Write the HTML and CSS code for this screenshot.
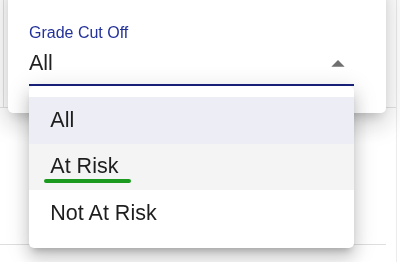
FILE: index.html
```html
<!DOCTYPE html>
<html lang="en">
<head>
<meta charset="utf-8">
<title>Grade Cut Off</title>
<link rel="stylesheet" href="styles.css">
</head>
<body>
  <div class="page">
    <div class="bg-main">
      <div class="bg-top"><div class="bg-rule"></div></div>
      <div class="bg-mid"></div>
      <div class="bg-line"></div>
    </div>
    <div class="bg-vline"></div>
  </div>

  <div class="dialog">
    <div class="field">
      <div class="field-label">Grade Cut Off</div>
      <div class="select">
        <span class="select-value">All</span>
        <svg class="select-icon" viewBox="0 0 24 24" aria-hidden="true"><path d="M7 14l5-5 5 5z"/></svg>
      </div>
    </div>
  </div>

  <ul class="menu">
    <li class="menu-item selected">All</li>
    <li class="menu-item hover">At Risk<span class="mark"></span></li>
    <li class="menu-item">Not At Risk</li>
  </ul>
</body>
</html>
```

FILE: styles.css
```css
html, body {
  margin: 0;
  padding: 0;
}
body {
  width: 400px;
  height: 262px;
  overflow: hidden;
  background: #ffffff;
  font-family: "Liberation Sans", Arial, Helvetica, sans-serif;
  color: rgba(0, 0, 0, 0.87);
}

/* background page */
.page {
  display: grid;
  grid-template-columns: 396px 1px;
  height: 262px;
}
.bg-main {
  display: flex;
  flex-direction: column;
}
.bg-top {
  height: 107px;
  padding-left: 3px;
  border-bottom: 1px solid #e2e2e2;
  display: flex;
}
.bg-rule {
  border-left: 1px solid #e2e2e2;
}
.bg-mid {
  height: 136px;
}
.bg-line {
  width: 386px;
  border-top: 1px solid #dedede;
}
.bg-vline {
  background: #ececec;
}

/* dialog */
.dialog {
  position: fixed;
  left: 8px;
  top: -20px;
  width: 378px;
  height: 133px;
  background: #ffffff;
  border-radius: 5px;
  box-shadow: 0 8px 12px -6px rgba(0, 0, 0, 0.2),
              0 12px 24px 2px rgba(0, 0, 0, 0.1),
              0 4px 30px 6px rgba(0, 0, 0, 0.08);
  box-sizing: border-box;
  padding: 45px 32px 0 21px;
}
.field {
  display: flex;
  flex-direction: column;
}
.field-label {
  font-size: 16px;
  line-height: 16px;
  color: #23319a;
  margin-bottom: 10px;
}
.select {
  position: relative;
  display: flex;
  align-items: center;
  height: 25.3px;
  padding-bottom: 7.5px;
  border-bottom: 2.5px solid #1a237e;
}
.select-value {
  font-size: 21.5px;
  line-height: 25.3px;
}
.select-icon {
  position: absolute;
  right: 0;
  top: -3px;
  width: 32px;
  height: 32px;
  fill: #6f6f6f;
}

/* menu */
.menu {
  position: fixed;
  left: 29px;
  top: 86.3px;
  width: 325px;
  margin: 0;
  padding: 10.67px 0;
  list-style: none;
  background: #ffffff;
  border-radius: 5px;
  box-shadow: 0 6px 7px -4px rgba(0, 0, 0, 0.22),
              0 10px 16px 1px rgba(0, 0, 0, 0.14),
              0 4px 22px 4px rgba(0, 0, 0, 0.1);
}
.menu-item {
  position: relative;
  display: flex;
  align-items: center;
  height: 46.67px;
  padding: 0 21.33px;
  font-size: 21.5px;
  color: #1e1e1e;
}
.menu-item.selected {
  background: #ededf5;
}
.menu-item.hover {
  background: #f4f4f4;
}
.mark {
  position: absolute;
  left: 15px;
  top: 35.5px;
  width: 87px;
  height: 4px;
  border-radius: 2px;
  background: #1b9a1f;
}
```
